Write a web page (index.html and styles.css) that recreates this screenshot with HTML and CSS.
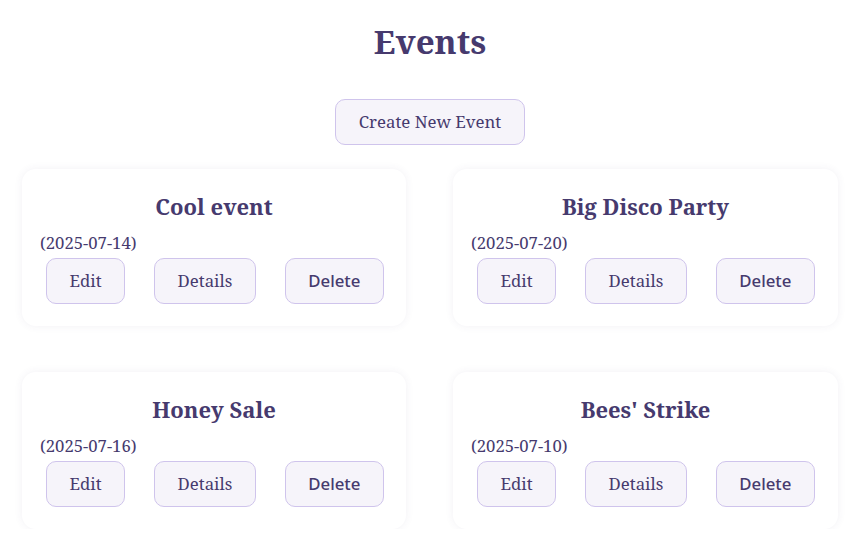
FILE: index.html
```html
<!DOCTYPE html>
<html>
<head>
<meta charset="utf-8">
<link rel="stylesheet" href="styles.css">
</head>
<body>
<main class="page">
  <h1 class="title">Events</h1>
  <div class="actions">
    <button class="btn create">Create New Event</button>
  </div>
  <div class="grid">
    <section class="card">
      <h2 class="card-title">Cool event</h2>
      <div class="date">(2025-07-14)</div>
      <div class="btns">
        <button class="btn">Edit</button>
        <button class="btn">Details</button>
        <button class="btn del">Delete</button>
      </div>
    </section>
    <section class="card">
      <h2 class="card-title">Big Disco Party</h2>
      <div class="date">(2025-07-20)</div>
      <div class="btns">
        <button class="btn">Edit</button>
        <button class="btn">Details</button>
        <button class="btn del">Delete</button>
      </div>
    </section>
    <section class="card">
      <h2 class="card-title">Honey Sale</h2>
      <div class="date">(2025-07-16)</div>
      <div class="btns">
        <button class="btn">Edit</button>
        <button class="btn">Details</button>
        <button class="btn del">Delete</button>
      </div>
    </section>
    <section class="card">
      <h2 class="card-title">Bees' Strike</h2>
      <div class="date">(2025-07-10)</div>
      <div class="btns">
        <button class="btn">Edit</button>
        <button class="btn">Details</button>
        <button class="btn del">Delete</button>
      </div>
    </section>
  </div>
</main>
</body>
</html>
```
FILE: styles.css
```css
html, body {
  margin: 0;
  padding: 0;
  background: #ffffff;
}
body {
  font-family: "Noto Serif", "DejaVu Serif", serif;
  color: #463a6e;
}
.page {
  padding: 22px 23px 0 22px;
}
.title {
  margin: 0;
  text-align: center;
  font-size: 33.2px;
  line-height: 40px;
  font-weight: 700;
}
.actions {
  display: flex;
  justify-content: center;
  margin-top: 37px;
}
.btn {
  box-sizing: border-box;
  height: 46px;
  font-family: "Noto Serif", "DejaVu Serif", serif;
  font-size: 16.8px;
  line-height: 22px;
  color: #463a6e;
  background: #f6f4fa;
  border: 1px solid #cfc4ec;
  border-radius: 10px;
  padding: 0 22.5px;
  cursor: pointer;
}
.del {
  font-family: "Noto Sans", "Open Sans", sans-serif;
  font-weight: 500;
}
.grid {
  display: grid;
  grid-template-columns: 384px 385px;
  column-gap: 47px;
  row-gap: 46px;
  margin-top: 24px;
}
.card {
  background: #fff;
  border-radius: 14px;
  box-shadow: 0 0 8px rgba(70, 58, 110, 0.07);
  padding: 20px 18px 22px;
}
.card-title {
  margin: 0;
  text-align: center;
  font-size: 22px;
  line-height: 34px;
  font-weight: 700;
}
.date {
  margin-top: 9px;
  font-size: 16.7px;
  line-height: 22px;
}
.btns {
  display: flex;
  gap: 29px;
  padding-left: 6px;
  margin-top: 4px;
}
```
